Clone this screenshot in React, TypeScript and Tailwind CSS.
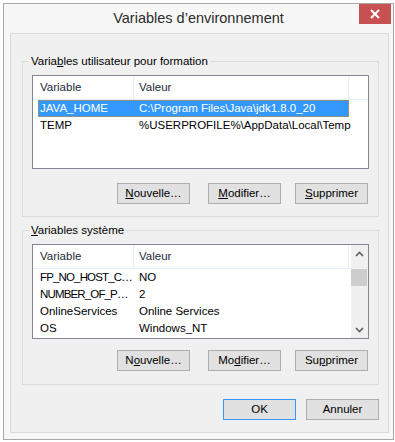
import React from "react";

const userVars = [
  { name: "JAVA_HOME", value: "C:\\Program Files\\Java\\jdk1.8.0_20", selected: true },
  { name: "TEMP", value: "%USERPROFILE%\\AppData\\Local\\Temp" },
];

const systemVars = [
  { name: "FP_NO_HOST_C…", value: "NO", tight: true },
  { name: "NUMBER_OF_P…", value: "2", tight: true },
  { name: "OnlineServices", value: "Online Services" },
  { name: "OS", value: "Windows_NT" },
];

const Chevron = ({ down }: { down?: boolean }) => (
  <svg width="9" height="6" viewBox="0 0 9 6">
    <polyline
      points={down ? "1,1 4.5,4.5 8,1" : "1,5 4.5,1.5 8,5"}
      fill="none"
      stroke="#606060"
      strokeWidth="1.6"
    />
  </svg>
);

const Button = ({ children, primary }: { children: React.ReactNode; primary?: boolean }) => (
  <button
    className={
      primary
        ? "w-[73px] h-[21px] border border-[#3399ff] bg-[#e1e1e1] text-[11.5px] leading-[19px] text-black"
        : "w-[73px] h-[21px] border border-[#adadad] bg-[#e1e1e1] text-[11.5px] leading-[19px] text-black"
    }
  >
    {children}
  </button>
);

const Header = () => (
  <div className="h-[24px] flex border-b border-[#e5edf7] text-[#1e2a3a]">
    <div className="w-[101px] shrink-0 pl-[7px] border-r border-[#e5edf7] leading-[23px]">Variable</div>
    <div className="w-[215px] shrink-0 pl-[5px] border-r border-[#e5edf7] leading-[23px]">Valeur</div>
    <div className="flex-1" />
  </div>
);

type Row = { name: string; value: string; selected?: boolean; tight?: boolean };

const Rows = ({ rows }: { rows: Row[] }) => (
  <div className="flex flex-col">
    {rows.map((r) => (
      <div
        key={r.name}
        className={
          r.selected
            ? "ml-[5px] w-[311px] h-[17px] flex bg-[#3399ff] text-white border border-dotted border-[#e0872a] leading-[15px]"
            : "ml-[5px] w-[311px] h-[17px] flex leading-[17px]"
        }
      >
        <div
          className={
            r.selected
              ? "w-[95px] shrink-0 pl-[1px] whitespace-nowrap"
              : r.tight
                ? "w-[96px] shrink-0 pl-[2px] whitespace-nowrap tracking-[-0.85px]"
                : "w-[96px] shrink-0 pl-[2px] whitespace-nowrap"
          }
        >
          {r.name}
        </div>
        <div className="pl-[5px] whitespace-nowrap">{r.value}</div>
      </div>
    ))}
  </div>
);

export default function App() {
  return (
    <div className="w-[395px] h-[442px] bg-white pt-[3px] pl-[3px] overflow-hidden font-[family-name:'Liberation_Sans',Arial,sans-serif] text-[11.5px] text-black">
      <div className="w-[391px] h-[437px] border border-[#a8a8a8] bg-[#f7f7f7] flex flex-col">
        {/* title bar */}
        <div className="relative h-[29px] flex items-center justify-center">
          <span className="text-[14.5px] text-[#2b2b2b] leading-none pb-[1px]">Variables d’environnement</span>
          <div className="absolute top-0 right-[2px] w-[32px] h-[20px] bg-[#c75050] flex items-center justify-center">
            <svg width="10" height="10" viewBox="0 0 10 10">
              <path d="M1 1 L9 9 M9 1 L1 9" stroke="white" strokeWidth="2" />
            </svg>
          </div>
        </div>

        {/* client area */}
        <div className="flex-1 ml-[6px] mr-[4px] mb-[6px] border border-[#dadada] bg-[#f0f0f0] pt-[19px] pl-[11px] pr-[9px] pb-[12px] flex flex-col">
          <fieldset className="border border-[#dcdcdc] px-[9px] pb-[12px]">
            <legend className="ml-[-3px] px-[2px] h-[16px] leading-[16px]">
              Varia<u>b</u>les utilisateur pour formation
            </legend>
            <div className="mt-[6px] h-[94px] border border-[#828790] bg-white">
              <Header />
              <Rows rows={userVars} />
            </div>
            <div className="mt-[14px] flex justify-end pr-[1px]">
              <Button>
                <u>N</u>ouvelle…
              </Button>
              <div className="w-[18px]" />
              <Button>
                <u>M</u>odifier…
              </Button>
              <div className="w-[14px]" />
              <Button>
                <u>S</u>upprimer
              </Button>
            </div>
          </fieldset>

          <fieldset className="mt-[5px] border border-[#dcdcdc] px-[9px] pb-[13px]">
            <legend className="ml-[-3px] px-[2px] h-[16px] leading-[16px]">
              <u>V</u>ariables système
            </legend>
            <div className="mt-[6px] h-[95px] border border-[#828790] bg-white flex">
              <div className="flex-1">
                <Header />
                <Rows rows={systemVars} />
              </div>
              <div className="w-[17px] bg-[#f0f0f0] flex flex-col">
                <div className="h-[17px] flex items-center justify-center">
                  <Chevron />
                </div>
                <div className="mt-[7px] h-[17px] mr-[1px] bg-[#cdcdcd]" />
                <div className="flex-1" />
                <div className="h-[17px] flex items-center justify-center">
                  <Chevron down />
                </div>
              </div>
            </div>
            <div className="mt-[11px] flex justify-end pr-[1px]">
              <Button>
                N<u>o</u>uvelle…
              </Button>
              <div className="w-[18px]" />
              <Button>
                Mo<u>d</u>ifier…
              </Button>
              <div className="w-[14px]" />
              <Button>
                Su<u>p</u>primer
              </Button>
            </div>
          </fieldset>

          <div className="mt-[14px] flex justify-end gap-[10px]">
            <Button primary>OK</Button>
            <Button>Annuler</Button>
          </div>
        </div>
      </div>
    </div>
  );
}
